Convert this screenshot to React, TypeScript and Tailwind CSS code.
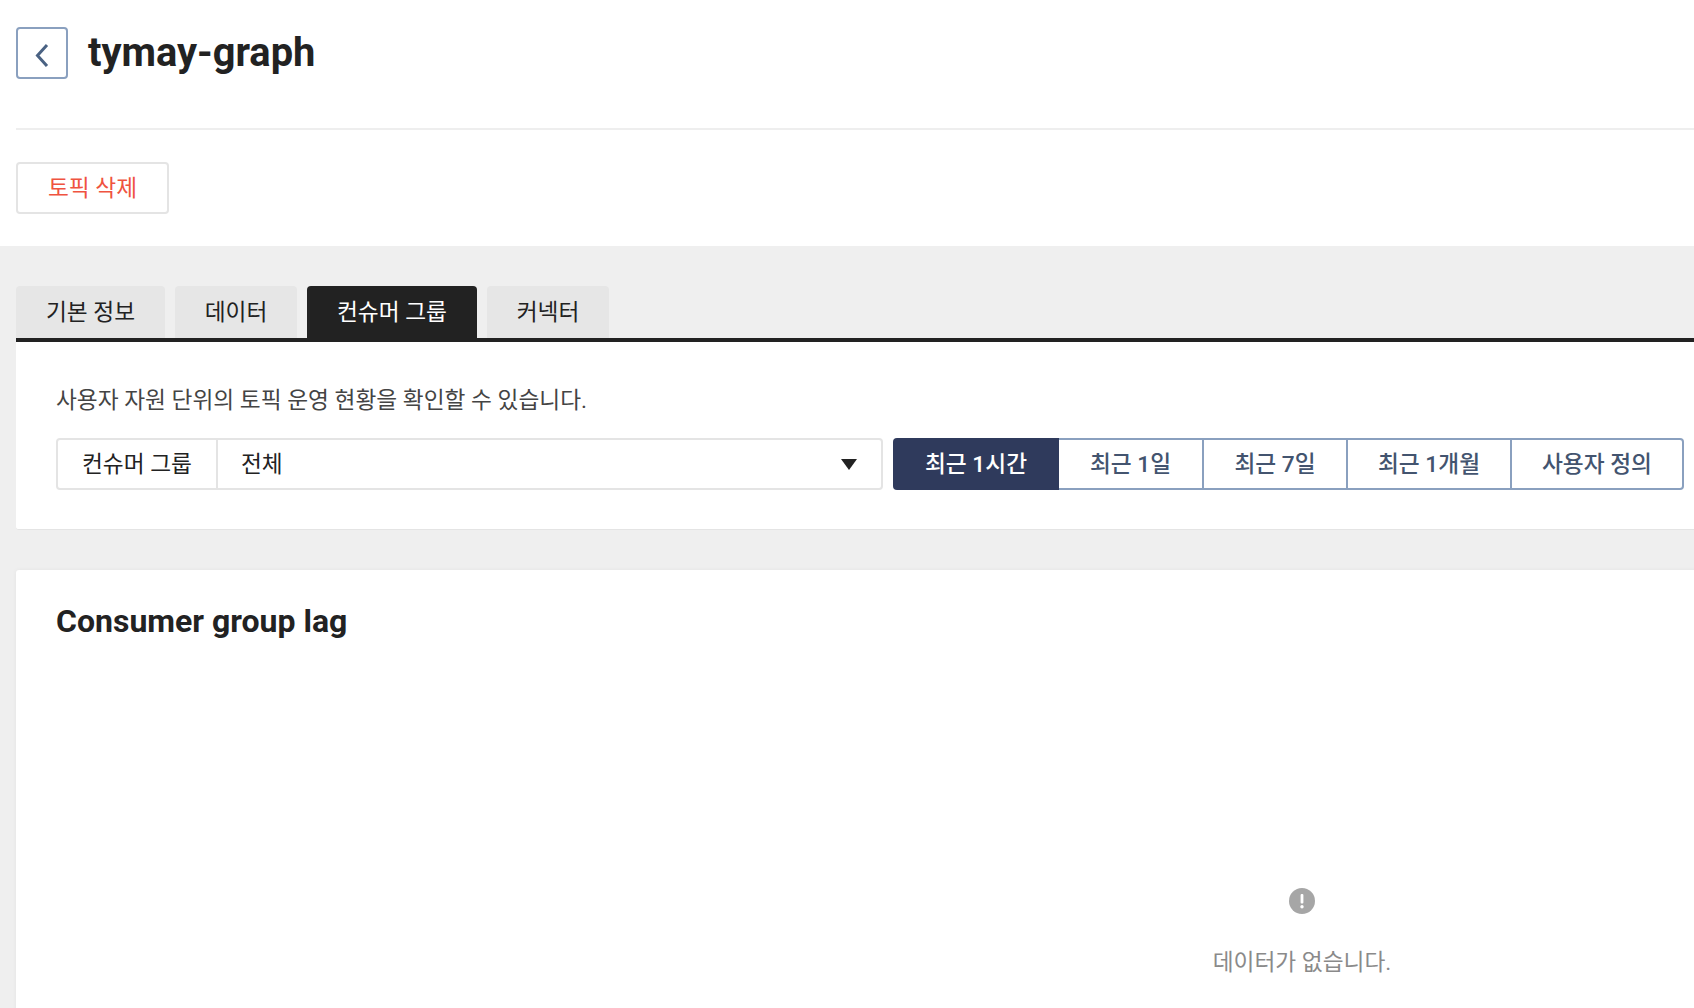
const font = "font-['Roboto','Noto_Sans_CJK_KR',sans-serif]";

const tabs = [
  { label: "기본 정보", width: "w-[149px]" },
  { label: "데이터", width: "w-[122px]" },
  { label: "컨슈머 그룹", width: "w-[170px]" },
  { label: "커넥터", width: "w-[122px]" },
];
const ranges = [
  { label: "최근 1시간", width: "w-[166px]" },
  { label: "최근 1일", width: "w-[145px]" },
  { label: "최근 7일", width: "w-[144px]" },
  { label: "최근 1개월", width: "w-[164px]" },
  { label: "사용자 정의", width: "w-[172px]" },
];

export default function App() {
  return (
    <div className={`${font} h-[1008px] w-[1694px] overflow-hidden bg-white text-[#222222]`}>
      <div className="w-[2604px]">
        <header className="h-[246px] px-4 pt-[27px]">
          <div className="flex h-[52px] items-center gap-5">
            <button className="flex h-[52px] w-[52px] items-center justify-center rounded-[4px] border-2 border-[#8aa0bf] bg-white">
              <svg className="mt-1" width="14" height="24" viewBox="0 0 14 24" fill="none" stroke="#4a6283" strokeWidth="3">
                <path d="M12 2 2.5 12.5 12 23" />
              </svg>
            </button>
            <h1 className="text-[39.8px] leading-[52px] font-bold">tymay-graph</h1>
          </div>
          <div className="mt-[49px] h-0.5 bg-[#eeeeee]" />
          <button className="mt-8 flex h-[52px] w-[153px] items-center justify-center rounded-[4px] border-2 border-[#e4e4e4] bg-white pt-0.5 text-[22.7px] text-[#ef5340]">
            토픽 삭제
          </button>
        </header>

        <main className="h-[762px] bg-[#efefef] px-4 pt-10">
          <nav className="flex gap-2.5">
            {tabs.map((tab, i) => (
              <div
                key={tab.label}
                className={`flex h-[52px] items-center justify-center rounded-t-[4px] pt-0.5 text-[22.7px] ${tab.width} ${
                  i === 2 ? "bg-[#222222] text-white" : "bg-[#e6e6e6] text-[#222222]"
                }`}
              >
                {tab.label}
              </div>
            ))}
          </nav>

          <section className="h-[192px] rounded-b-[3px] border-b border-t-4 border-b-[#e4e4e4] border-t-[#222222] bg-white px-10 pt-[39px]">
            <p className="text-[22.7px] leading-[40px] text-[#444444]">사용자 자원 단위의 토픽 운영 현황을 확인할 수 있습니다.</p>
            <div className="mt-[17px] flex gap-2.5">
              <div className="flex h-[52px] w-[827px] items-center rounded-[4px] border-2 border-[#e4e4e4] text-[22.7px]">
                <div className="flex h-full w-[160px] items-center justify-center border-r-2 border-[#e4e4e4] pt-0.5">컨슈머 그룹</div>
                <div className="flex flex-1 items-center justify-between pr-6 pl-6 pt-0.5">
                  <span className="-ml-px">전체</span>
                  <svg width="16" height="11" viewBox="0 0 16 11" fill="#222222">
                    <path d="M0 0h16L8 11z" />
                  </svg>
                </div>
              </div>
              <div className="flex h-[52px] text-[22.7px] font-medium text-[#43546f]">
                {ranges.map((range, i) => (
                  <div
                    key={range.label}
                    className={`flex items-center justify-center pt-0.5 ${range.width} ${
                      i === 0
                        ? "rounded-l-[4px] bg-[#2f3a5c] text-white"
                        : `border-y-2 border-r-2 border-[#8aa0bf] ${i === ranges.length - 1 ? "rounded-r-[4px]" : ""}`
                    }`}
                  >
                    {range.label}
                  </div>
                ))}
              </div>
            </div>
          </section>

          <section className="mt-10 h-[500px] rounded-t-[3px] bg-white px-10 pt-[26px] shadow-[0_0_4px_rgba(0,0,0,0.05)]">
            <h2 className="text-[32px] leading-[50px] font-bold">Consumer group lag</h2>
            <div className="mt-[242px] flex flex-col items-center">
              <svg width="26" height="26" viewBox="0 0 26 26">
                <circle cx="13" cy="13" r="13" fill="#a6a6a6" />
                <rect x="11.6" y="6" width="2.8" height="9.5" rx="1" fill="#ffffff" />
                <circle cx="13" cy="18.8" r="1.7" fill="#ffffff" />
              </svg>
              <p className="mt-[33px] text-[22.7px] leading-[32px] text-[#8a8a8a]">데이터가 없습니다.</p>
            </div>
          </section>
        </main>
      </div>
    </div>
  );
}
